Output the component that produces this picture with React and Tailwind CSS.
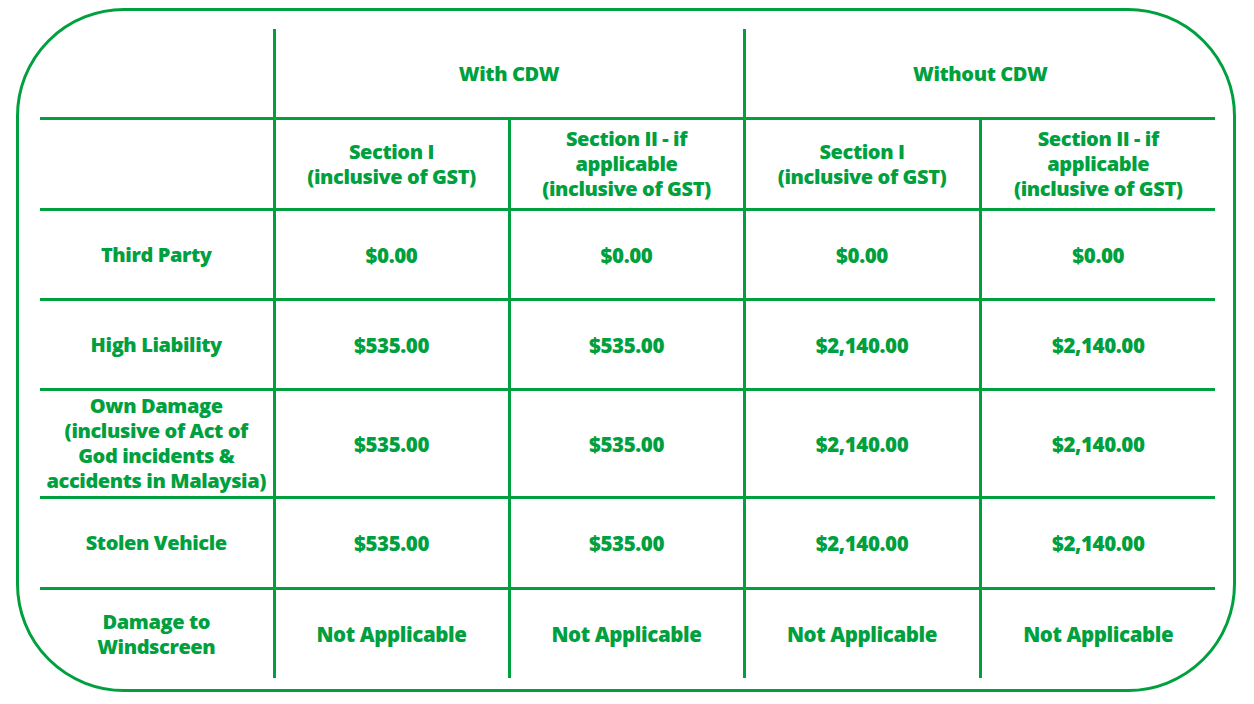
import React from "react";

const GREEN = "text-[#00a03e]";

const rows = [
  { label: ["Third Party"], values: ["$0.00", "$0.00", "$0.00", "$0.00"], h: "h-[90px]" },
  { label: ["High Liability"], values: ["$535.00", "$535.00", "$2,140.00", "$2,140.00"], h: "h-[90px]" },
  {
    label: ["Own Damage", "(inclusive of Act of", "God incidents &", "accidents in Malaysia)"],
    values: ["$535.00", "$535.00", "$2,140.00", "$2,140.00"],
    h: "h-[108px]",
  },
  { label: ["Stolen Vehicle"], values: ["$535.00", "$535.00", "$2,140.00", "$2,140.00"], h: "h-[91px]" },
  {
    label: ["Damage to", "Windscreen"],
    values: ["Not Applicable", "Not Applicable", "Not Applicable", "Not Applicable"],
    h: "h-[90px]",
  },
];

const cell = "border-[3px] border-[#00a03e] text-center align-middle p-0";

const Lines = ({ lines }) => (
  <>
    {lines.map((l, i) => (
      <div key={i}>{l}</div>
    ))}
  </>
);

export default function App() {
  return (
    <div className="w-[1254px] h-[704px] bg-white pt-[8px] pl-[16px]">
      <div className="w-[1220px] h-[684px] border-[3px] border-[#00a03e] rounded-[108px] pt-[18px] pl-[21px]">
        <table
          className={`table-fixed border-collapse border-hidden w-[1175px] font-['Open_Sans',sans-serif] font-extrabold text-[20px] leading-[25px] tracking-[-0.4px] ${GREEN}`}
        >
          <colgroup>
            <col className="w-[234px]" />
            <col className="w-[235px]" />
            <col className="w-[235px]" />
            <col className="w-[236px]" />
            <col className="w-[235px]" />
          </colgroup>
          <tbody>
            <tr className="h-[89px]">
              <td className={`${cell} pt-[2px]`}></td>
              <td className={`${cell} pt-[2px]`} colSpan={2}>With CDW</td>
              <td className={`${cell} pt-[2px]`} colSpan={2}>Without CDW</td>
            </tr>
            <tr className="h-[91px]">
              <td className={cell}></td>
              <td className={cell}>
                <Lines lines={["Section I", "(inclusive of GST)"]} />
              </td>
              <td className={cell}>
                <Lines lines={["Section II - if", "applicable", "(inclusive of GST)"]} />
              </td>
              <td className={cell}>
                <Lines lines={["Section I", "(inclusive of GST)"]} />
              </td>
              <td className={cell}>
                <Lines lines={["Section II - if", "applicable", "(inclusive of GST)"]} />
              </td>
            </tr>
            {rows.map((r, i) => (
              <tr key={i} className={r.h}>
                <td className={cell}>
                  <Lines lines={r.label} />
                </td>
                {r.values.map((v, j) => (
                  <td key={j} className={`${cell} pt-[2px] text-[20.5px]`}>
                    {v}
                  </td>
                ))}
              </tr>
            ))}
          </tbody>
        </table>
      </div>
    </div>
  );
}
